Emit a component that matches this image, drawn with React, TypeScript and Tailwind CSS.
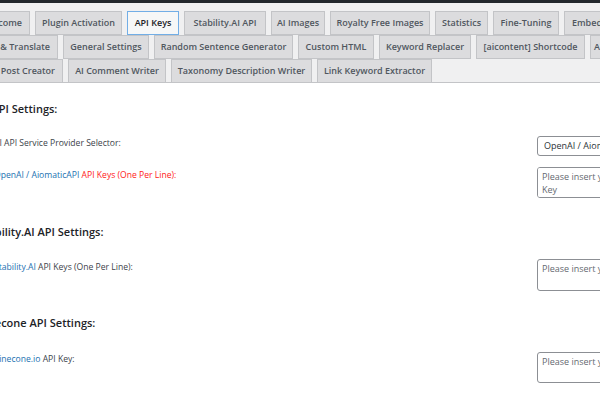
import type { ReactNode } from "react";

type Tab = { label: string; w: string; active?: boolean; clip?: boolean };

const tabRows: { offset: string; tabs: Tab[] }[] = [
  {
    offset: "ml-[-30px]",
    tabs: [
      { label: "Welcome", w: "w-[60px]", clip: true },
      { label: "Plugin Activation", w: "w-[87px]" },
      { label: "API Keys", w: "w-[52px]", active: true },
      { label: "Stability.AI API", w: "w-[82px]" },
      { label: "AI Images", w: "w-[54px]" },
      { label: "Royalty Free Images", w: "w-[100px]" },
      { label: "Statistics", w: "w-[53px]" },
      { label: "Fine-Tuning", w: "w-[66px]" },
      { label: "Embeddings", w: "w-auto px-[7px]" },
    ],
  },
  {
    offset: "ml-[-42px]",
    tabs: [
      { label: "Spin & Translate", w: "w-[100px]", clip: true },
      { label: "General Settings", w: "w-[86px]" },
      { label: "Random Sentence Generator", w: "w-[139px]" },
      { label: "Custom HTML", w: "w-[76px]" },
      { label: "Keyword Replacer", w: "w-[92px]" },
      { label: "[aicontent] Shortcode", w: "w-[109px]" },
      { label: "AI Assistants", w: "w-auto px-[3px]" },
    ],
  },
  {
    offset: "ml-[-57px] -mb-px",
    tabs: [
      { label: "Single Post Creator", w: "w-[120px]", clip: true },
      { label: "AI Comment Writer", w: "w-[98px]" },
      { label: "Taxonomy Description Writer", w: "w-[141px]" },
      { label: "Link Keyword Extractor", w: "w-[115px]" },
    ],
  },
];

function Link({ children }: { children: ReactNode }) {
  return <span className="text-[#2271b1]">{children}</span>;
}

function Row({ label, pt, children }: { label: ReactNode; pt: string; children: ReactNode }) {
  return (
    <div className="flex items-start">
      <div className={`w-[559px] shrink-0 pl-[16px] text-[8.6px] leading-[12px] text-[#3c434a] ${pt}`}>{label}</div>
      {children}
    </div>
  );
}

const boxCls =
  "w-[202px] shrink-0 resize-none rounded-[3px] border border-[#8c8f94] bg-white px-[4px] py-[1.5px] text-[9px] leading-[13.5px] text-[#2c3338] placeholder:text-[#646970] outline-none";

export default function App() {
  return (
    <div className="w-[600px] h-[400px] overflow-hidden bg-white font-['Open_Sans',sans-serif]">
      <div className="h-[3px] bg-[#23282d]" />

      {/* tab bar */}
      <div className="bg-[#f0f0f1] pt-[8px] border-b border-[#c3c4c7]">
        {tabRows.map((row, i) => (
          <div key={i} className={`flex gap-[5px] h-[24px] whitespace-nowrap ${row.offset}`}>
            {row.tabs.map((t) => (
              <div
                key={t.label}
                className={`${t.w} shrink-0 h-[24px] flex items-center border text-[9px] font-semibold ${
                  t.clip ? "justify-end pr-[7px]" : "justify-center"
                } ${
                  t.active
                    ? "bg-[#f6f7f7] border-[#72aee6] text-[#1d2327]"
                    : "bg-[#dcdcde] border-[#c3c4c7] text-[#50575e]"
                }`}
              >
                {t.label}
              </div>
            ))}
          </div>
        ))}
      </div>

      {/* settings */}
      <div className="ml-[-22px] w-[820px]">
        <h3 className="mt-[17px] h-[17px] text-[11px] leading-[17px] font-semibold text-[#1d2327]">AI API Settings:</h3>

        <div className="mt-[19px]">
          <Row label="AI API Service Provider Selector:" pt="pt-[1px]">
            <select className="h-[20px] w-[202px] shrink-0 appearance-none rounded-[3px] border border-[#8c8f94] bg-white pl-[6px] text-[9px] text-[#2c3338] outline-none">
              <option>OpenAI / AiomaticAPI</option>
            </select>
          </Row>
        </div>

        <div className="mt-[11px]">
          <Row
            pt="pt-[2px]"
            label={
              <>
                <Link>OpenAI</Link> <Link>/</Link> <Link>AiomaticAPI</Link>{" "}
                <span className="text-[#ff2020]">API Keys (One Per Line):</span>
              </>
            }
          >
            <textarea className={`${boxCls} h-[31px]`} placeholder="Please insert your OpenAI / AiomaticAPI API Key" />
          </Row>
        </div>

        <h3 className="mt-[25px] h-[17px] text-[11px] leading-[17px] font-semibold text-[#1d2327]">Stability.AI API Settings:</h3>

        <div className="mt-[19px]">
          <Row
            pt="pt-[2px]"
            label={
              <>
                <Link>Stability.AI</Link> API Keys (One Per Line):
              </>
            }
          >
            <textarea className={`${boxCls} h-[32px]`} placeholder="Please insert your Stability.AI API Key" />
          </Row>
        </div>

        <h3 className="mt-[23px] h-[17px] text-[11px] leading-[17px] font-semibold text-[#1d2327]">Pinecone API Settings:</h3>

        <div className="mt-[21px]">
          <Row
            pt="pt-[1px]"
            label={
              <>
                <Link>Pinecone.io</Link> API Key:
              </>
            }
          >
            <textarea className={`${boxCls} h-[31px]`} placeholder="Please insert your Pinecone API Key" />
          </Row>
        </div>
      </div>
    </div>
  );
}
